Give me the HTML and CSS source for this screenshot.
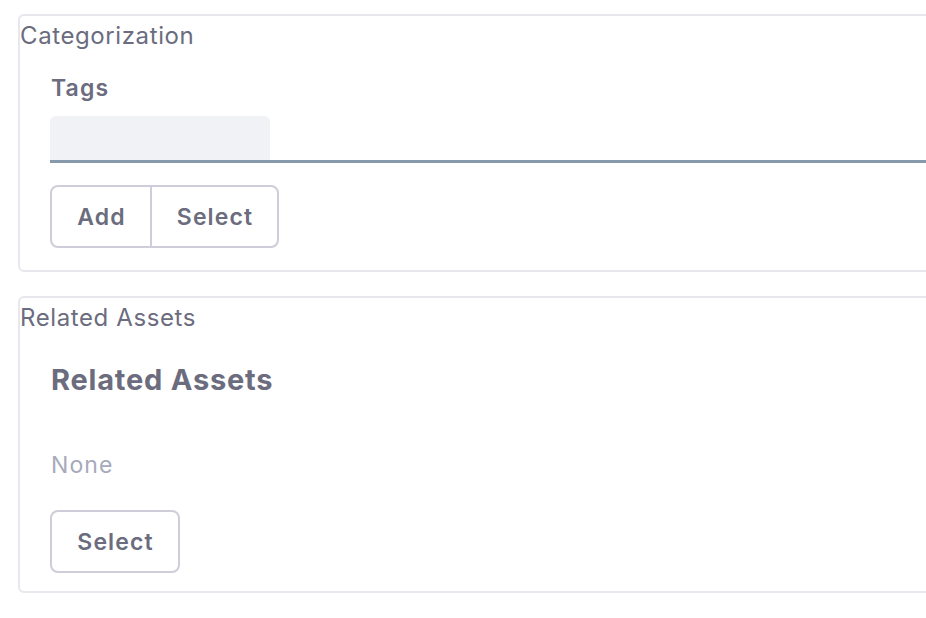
FILE: index.html
```html
<!DOCTYPE html>
<html>
<head>
<meta charset="utf-8">
<link rel="stylesheet" href="styles.css">
</head>
<body>
<div class="page">
  <fieldset class="panel panel-cat">
    <legend class="panel-legend">Categorization</legend>
    <div class="panel-body">
      <label class="field-label">Tags</label>
      <div class="tag-input">
        <div class="tag-input-field"></div>
      </div>
      <div class="btn-group">
        <button class="btn btn-first">Add</button>
        <button class="btn btn-last">Select</button>
      </div>
    </div>
  </fieldset>
  <fieldset class="panel panel-rel">
    <legend class="panel-legend">Related Assets</legend>
    <div class="panel-body panel-body-rel">
      <h3 class="rel-title">Related Assets</h3>
      <p class="rel-none">None</p>
      <button class="btn btn-single">Select</button>
    </div>
  </fieldset>
</div>
</body>
</html>
```
FILE: styles.css
```css
html, body {
  margin: 0;
  padding: 0;
  background: #ffffff;
}
body {
  font-family: Inter, "Noto Sans", sans-serif;
  color: #6b6c7e;
  overflow: hidden;
}
.page {
  padding: 14px 0 0 18px;
  display: flex;
  flex-direction: column;
  gap: 24px;
  width: 940px;
}
.panel {
  margin: 0;
  border: 2px solid #e7e7ed;
  border-radius: 6px;
  padding: 0;
  min-width: 0;
  position: relative;
}
.panel-legend {
  float: left;
  padding: 0;
  margin: 0;
  font-size: 24px;
  line-height: 40px;
  font-weight: 400;
  letter-spacing: 0.6px;
  color: #6b6c7e;
  width: 100%;
}
.panel-body {
  clear: both;
  padding: 0 0 22px 30px;
  display: flex;
  flex-direction: column;
  align-items: flex-start;
}
.panel-body-rel {
  padding-bottom: 18px;
}
.field-label {
  font-size: 23px;
  font-weight: 600;
  line-height: 28px;
  letter-spacing: 1.1px;
  margin: 18px 0 14px 1px;
}
.tag-input {
  align-self: stretch;
  border-bottom: 3px solid #879aab;
  height: 44px;
  margin-bottom: 22px;
}
.tag-input-field {
  width: 220px;
  height: 44px;
  background: #f1f2f5;
  border-radius: 6px 6px 0 0;
}
.btn-group {
  display: flex;
}
.btn {
  font-family: inherit;
  font-size: 23px;
  font-weight: 600;
  letter-spacing: 1.1px;
  color: #6b6c7e;
  background: #ffffff;
  border: 2px solid #cdced9;
  height: 63px;
  padding: 0 0 0 1px;
  margin: 0;
}
.btn-first {
  width: 101px;
  border-radius: 8px 0 0 8px;
  border-right-width: 1px;
}
.btn-last {
  width: 128px;
  border-radius: 0 8px 8px 0;
  border-left-width: 1px;
}
.btn-single {
  width: 130px;
  border-radius: 8px;
}
.rel-title {
  margin: 24px 0 0 1px;
  font-size: 29px;
  font-weight: 700;
  line-height: 36px;
  letter-spacing: 0.8px;
}
.rel-none {
  margin: 53px 0 0 1px;
  font-size: 23px;
  line-height: 28px;
  letter-spacing: 1.1px;
  color: #a7a9bc;
}
.rel-none + .btn-single {
  margin-top: 31px;
}
```
